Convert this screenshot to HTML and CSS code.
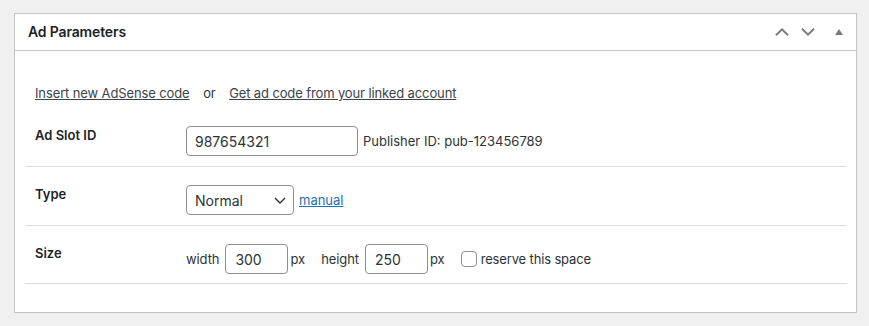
FILE: index.html
```html
<!DOCTYPE html>
<html lang="en">
	<head>
		<meta charset="UTF-8" />
		<meta name="viewport" content="width=device-width, initial-scale=1.0" />
		<title>Ad Parameters</title>
		<link rel="stylesheet" href="styles.css">
	</head>
	<body>
		<div class="postbox">
			<div class="postbox-header">
				<h2>Ad Parameters</h2>
				<div class="handle-actions">
					<button class="handle-order" aria-label="Move up">
						<svg width="14" height="8" viewBox="0 0 14 8"><path d="M1 7.2 L7 1.4 L13 7.2" fill="none" stroke="#787c82" stroke-width="2"/></svg>
					</button>
					<button class="handle-order" aria-label="Move down">
						<svg width="14" height="8" viewBox="0 0 14 8"><path d="M1 0.8 L7 6.6 L13 0.8" fill="none" stroke="#787c82" stroke-width="2"/></svg>
					</button>
					<button class="handle-toggle" aria-label="Toggle panel">
						<svg width="8" height="6" viewBox="0 0 8 6"><path d="M0 6 L4 0 L8 6 Z" fill="#787c82"/></svg>
					</button>
				</div>
			</div>
			<div class="inside">
				<p class="ad-links">
					<a href="#">Insert new AdSense code</a>
					<span class="or">or</span>
					<a href="#">Get ad code from your linked account</a>
				</p>
				<div class="form-table">
					<div class="form-row">
						<div class="row-label">Ad Slot ID</div>
						<div class="row-field">
							<input type="text" class="text-input slot-input" value="987654321" />
							<span class="hint">Publisher ID: pub-123456789</span>
						</div>
					</div>
					<div class="form-row">
						<div class="row-label">Type</div>
						<div class="row-field">
							<span class="select-wrap">
								<select class="type-select">
									<option>Normal</option>
								</select>
								<svg class="select-arrow" width="12" height="7" viewBox="0 0 12 7"><path d="M1 1 L6 6 L11 1" fill="none" stroke="#2c3338" stroke-width="1.4"/></svg>
							</span>
							<a href="#" class="manual-link">manual</a>
						</div>
					</div>
					<div class="form-row">
						<div class="row-label">Size</div>
						<div class="row-field">
							<span class="size-word">width</span>
							<input type="text" class="text-input size-input" value="300" />
							<span class="unit">px</span>
							<span class="size-word">height</span>
							<input type="text" class="text-input size-input" value="250" />
							<span class="unit">px</span>
							<label class="reserve">
								<span class="checkbox"></span>
								reserve this space
							</label>
						</div>
					</div>
				</div>
			</div>
		</div>
	</body>
</html>
```

FILE: styles.css
```css
body {
	margin: 0;
	padding: 13px 0 0 14px;
	background-color: #f0f0f1;
	font-family: Inter, 'Liberation Sans', sans-serif;
	font-size: 13px;
	line-height: 18px;
	color: #2c3338;
}
.postbox {
	width: 843px;
	box-sizing: border-box;
	border: 1px solid #c3c4c7;
	background: #ffffff;
}
.postbox-header {
	display: flex;
	align-items: center;
	justify-content: space-between;
	height: 36px;
	border-bottom: 1px solid #c3c4c7;
}
.postbox-header h2 {
	margin: 0;
	padding-left: 13px;
	font-size: 14px;
	font-weight: 600;
	letter-spacing: -0.15px;
	color: #1d2327;
}
.handle-actions {
	display: flex;
	height: 100%;
}
.handle-actions button {
	border: 0;
	background: none;
	padding: 0;
	display: flex;
	align-items: center;
	justify-content: center;
	cursor: pointer;
}
.handle-order {
	width: 26px;
}
.handle-toggle {
	width: 35px;
}
.inside {
	padding: 33px 9px 28px 10px;
}
.ad-links {
	margin: 0 0 6px 10px;
	letter-spacing: -0.12px;
}
.ad-links a {
	color: #3c434a;
	text-decoration: underline;
}
.ad-links .or {
	margin: 0 10px;
}
.form-row {
	display: flex;
	padding: 18px 0 10px;
	border-bottom: 1px solid #dcdcde;
}
.form-row:last-child {
	padding-bottom: 9px;
}
.row-label {
	width: 151px;
	padding-left: 10px;
	font-weight: 600;
	color: #1d2327;
}
.row-field {
	display: flex;
	align-items: center;
	height: 30px;
}
.text-input {
	box-sizing: border-box;
	height: 30px;
	padding: 0 8px;
	border: 1px solid #8c8f94;
	border-radius: 4px;
	font-family: inherit;
	font-size: 14px;
	color: #2c3338;
	background: #ffffff;
}
.slot-input {
	width: 172px;
}
.hint {
	margin-left: 5px;
}
.select-wrap {
	position: relative;
	display: inline-flex;
}
.type-select {
	appearance: none;
	-webkit-appearance: none;
	box-sizing: border-box;
	width: 108px;
	height: 30px;
	padding: 0 24px 0 8px;
	border: 1px solid #8c8f94;
	border-radius: 4px;
	background: #ffffff;
	font-family: inherit;
	font-size: 14px;
	color: #2c3338;
}
.select-arrow {
	position: absolute;
	right: 8px;
	top: 12px;
	pointer-events: none;
}
.manual-link {
	margin-left: 5px;
	color: #2271b1;
	text-decoration: underline;
}
.size-word {
	margin-right: 6px;
	letter-spacing: -0.1px;
}
.size-input {
	width: 63px;
	padding: 0 9px;
}
.unit {
	margin: 0 16px 0 2px;
}
.reserve {
	display: flex;
	align-items: center;
	letter-spacing: -0.15px;
}
.checkbox {
	box-sizing: border-box;
	width: 16px;
	height: 16px;
	margin-right: 4px;
	border: 1px solid #8c8f94;
	border-radius: 4px;
	background: #ffffff;
}
```
